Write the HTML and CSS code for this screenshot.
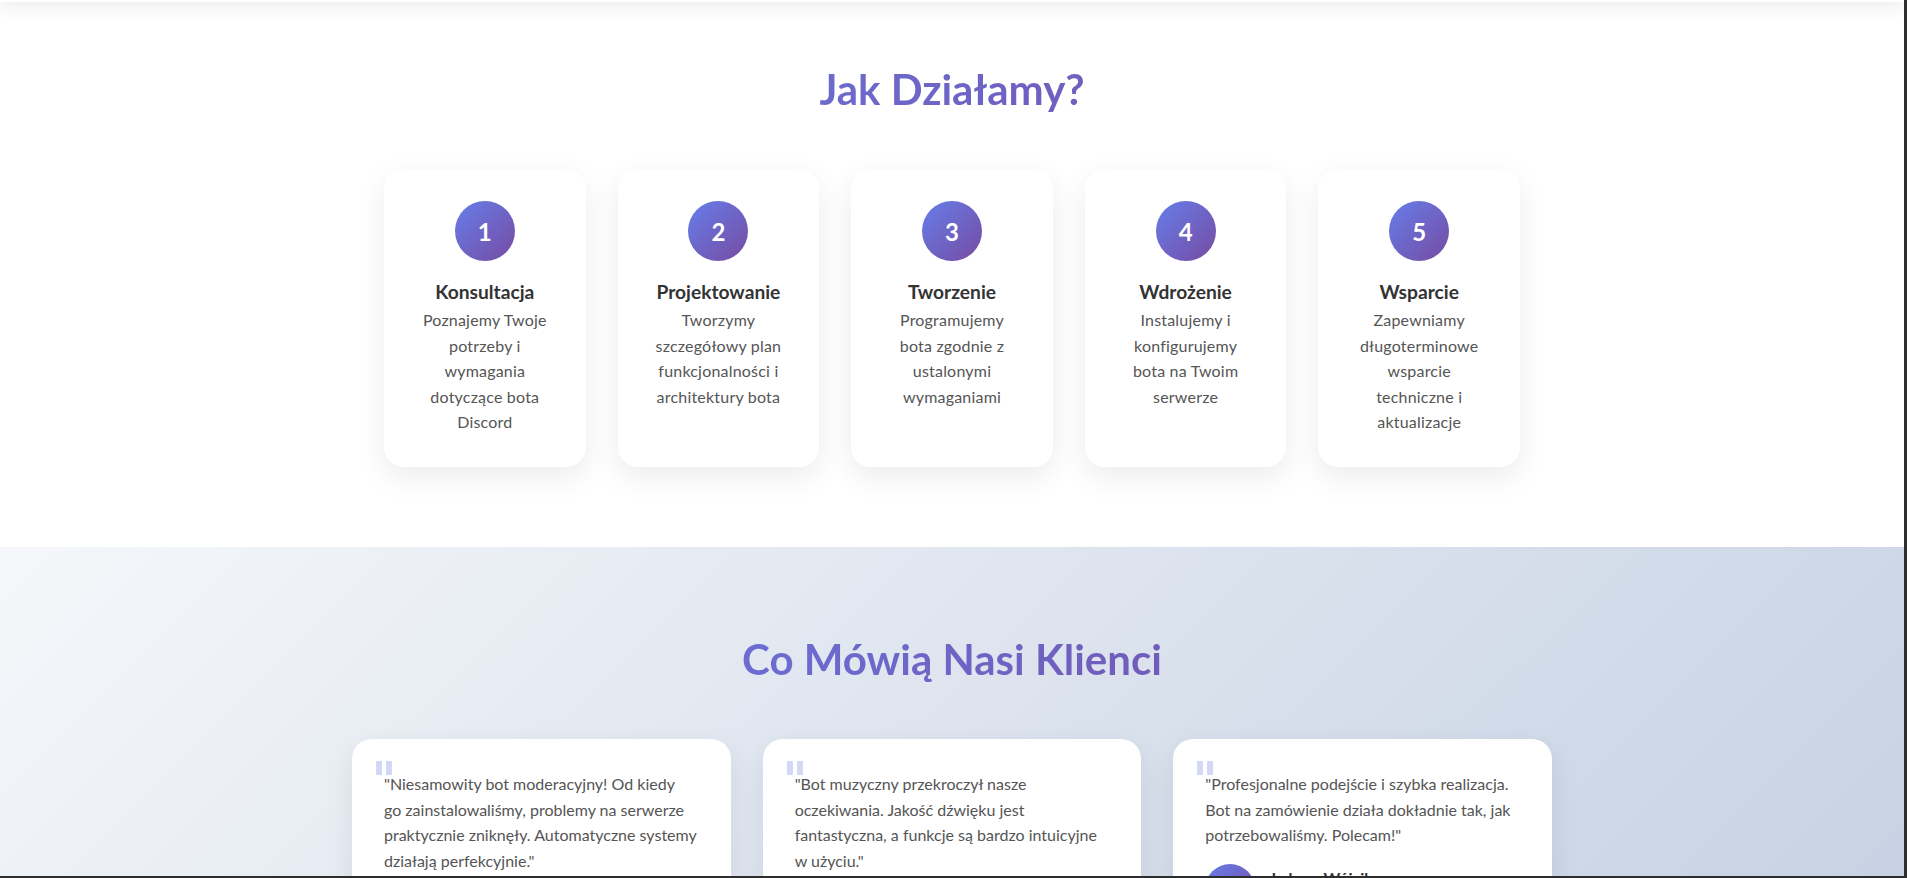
FILE: index.html
```html
<!DOCTYPE html>
<html lang="pl">
<head>
<meta charset="utf-8">
<title>Jak Działamy?</title>
<link rel="stylesheet" href="styles.css">
</head>
<body>
<header class="topbar"></header>
<div class="frame"></div>
<main class="page">
  <section class="process">
    <div class="container container--padded">
      <h2 class="section-title">Jak Działamy?</h2>
      <div class="steps">
        <div class="step">
          <div class="step-number">1</div>
          <h3 class="step-title">Konsultacja</h3>
          <p class="step-text">Poznajemy Twoje potrzeby i wymagania dotyczące bota Discord</p>
        </div>
        <div class="step">
          <div class="step-number">2</div>
          <h3 class="step-title">Projektowanie</h3>
          <p class="step-text">Tworzymy szczegółowy plan funkcjonalności i architektury bota</p>
        </div>
        <div class="step">
          <div class="step-number">3</div>
          <h3 class="step-title">Tworzenie</h3>
          <p class="step-text">Programujemy bota zgodnie z ustalonymi wymaganiami</p>
        </div>
        <div class="step">
          <div class="step-number">4</div>
          <h3 class="step-title">Wdrożenie</h3>
          <p class="step-text">Instalujemy i konfigurujemy bota na Twoim serwerze</p>
        </div>
        <div class="step">
          <div class="step-number">5</div>
          <h3 class="step-title">Wsparcie</h3>
          <p class="step-text">Zapewniamy długoterminowe wsparcie techniczne i aktualizacje</p>
        </div>
      </div>
    </div>
  </section>

  <section class="testimonials">
    <div class="container">
      <h2 class="section-title">Co Mówią Nasi Klienci</h2>
      <div class="testimonial-grid">
        <div class="testimonial">
          <p class="testimonial-text">"Niesamowity bot moderacyjny! Od kiedy go&nbsp;zainstalowaliśmy, problemy na serwerze praktycznie zniknęły. Automatyczne systemy działają perfekcyjnie."</p>
          <div class="author">
            <div class="avatar"></div>
            <div class="author-info">
              <div class="author-name">Marek Kowalski</div>
              <div class="author-role">Właściciel serwera Gaming</div>
            </div>
          </div>
        </div>
        <div class="testimonial">
          <p class="testimonial-text">"Bot muzyczny przekroczył nasze oczekiwania. Jakość dźwięku jest fantastyczna, a funkcje są bardzo intuicyjne w użyciu."</p>
          <div class="author">
            <div class="avatar"></div>
            <div class="author-info">
              <div class="author-name">Anna Nowak</div>
              <div class="author-role">Administrator społeczności</div>
            </div>
          </div>
        </div>
        <div class="testimonial">
          <p class="testimonial-text">"Profesjonalne podejście i szybka realizacja. Bot na zamówienie działa dokładnie tak, jak potrzebowaliśmy. Polecam!"</p>
          <div class="author">
            <div class="avatar"></div>
            <div class="author-info">
              <div class="author-name">Łukasz Wójcik</div>
              <div class="author-role">Moderator serwera</div>
            </div>
          </div>
        </div>
      </div>
    </div>
  </section>
</main>
</body>
</html>
```

FILE: styles.css
```css
* {
  box-sizing: border-box;
}

html, body {
  margin: 0;
  padding: 0;
}

body {
  font-family: Lato, "Noto Sans", sans-serif;
  color: #333;
  background: #fff;
  overflow: hidden;
}

.page {
  margin-right: 3px;
}

.topbar {
  position: fixed;
  top: -68px;
  left: 0;
  right: 3px;
  height: 70px;
  background: #fff;
  box-shadow: 0 2px 20px rgba(0, 0, 0, 0.1);
  z-index: 10;
}

.frame {
  position: fixed;
  inset: 0;
  border-right: 3px solid #2d2d2d;
  border-bottom: 2px solid #2d2d2d;
  pointer-events: none;
  z-index: 20;
}

.container {
  max-width: 1200px;
  margin: 0 auto;
}

.container--padded {
  padding: 0 2rem;
}

.section-title {
  margin: 0 0 3rem;
  font-size: 42px;
  line-height: 64px;
  font-weight: 700;
  text-align: center;
  background: linear-gradient(135deg, #667eea 0%, #764ba2 100%);
  -webkit-background-clip: text;
  background-clip: text;
  color: transparent;
}

.process {
  background: #fff;
  padding: 57px 0 80px;
}

.steps {
  display: grid;
  grid-template-columns: repeat(auto-fit, minmax(200px, 1fr));
  gap: 2rem;
}

.step {
  background: #fff;
  border-radius: 20px;
  padding: 2rem;
  text-align: center;
  box-shadow: 0 10px 30px rgba(0, 0, 0, 0.08);
}

.step-number {
  width: 60px;
  height: 60px;
  margin: 0 auto 19px;
  border-radius: 50%;
  background: linear-gradient(135deg, #667eea 0%, #764ba2 100%);
  color: #fff;
  font-size: 24px;
  font-weight: 700;
  display: flex;
  align-items: center;
  justify-content: center;
}

.step-title {
  margin: 0 0 3px;
  font-size: 19.2px;
  line-height: 24px;
  font-weight: 700;
  color: #333;
}

.step-text {
  margin: 0;
  font-size: 16px;
  line-height: 25.6px;
  letter-spacing: 0.2px;
  color: #555;
}

.testimonials {
  background: linear-gradient(135deg, #f5f7fa 0%, #c3cfe2 100%);
  padding: 80px 0;
}

.testimonial-grid {
  display: grid;
  grid-template-columns: repeat(auto-fit, minmax(350px, 1fr));
  gap: 2rem;
}

.testimonial {
  position: relative;
  background: #fff;
  border-radius: 20px;
  padding: 2rem;
  box-shadow: 0 10px 30px rgba(0, 0, 0, 0.08);
}

.testimonial::before {
  content: "";
  position: absolute;
  top: 22px;
  left: 24px;
  width: 16px;
  height: 14px;
  background:
    linear-gradient(#d3d8f8, #d3d8f8) left top / 6px 14px no-repeat,
    linear-gradient(#d3d8f8, #d3d8f8) right top / 6px 14px no-repeat;
}

.testimonial-text {
  position: relative;
  margin: 0 0 1rem;
  font-size: 16px;
  line-height: 25.6px;
  color: #555;
}

.author {
  display: flex;
  align-items: center;
  gap: 1rem;
}

.avatar {
  width: 50px;
  height: 50px;
  flex: none;
  border-radius: 50%;
  background: linear-gradient(135deg, #667eea 0%, #764ba2 100%);
}

.author-name {
  font-size: 16px;
  line-height: 25.6px;
  font-weight: 700;
  color: #333;
}

.author-role {
  font-size: 14px;
  line-height: 22px;
  color: #777;
}
```
